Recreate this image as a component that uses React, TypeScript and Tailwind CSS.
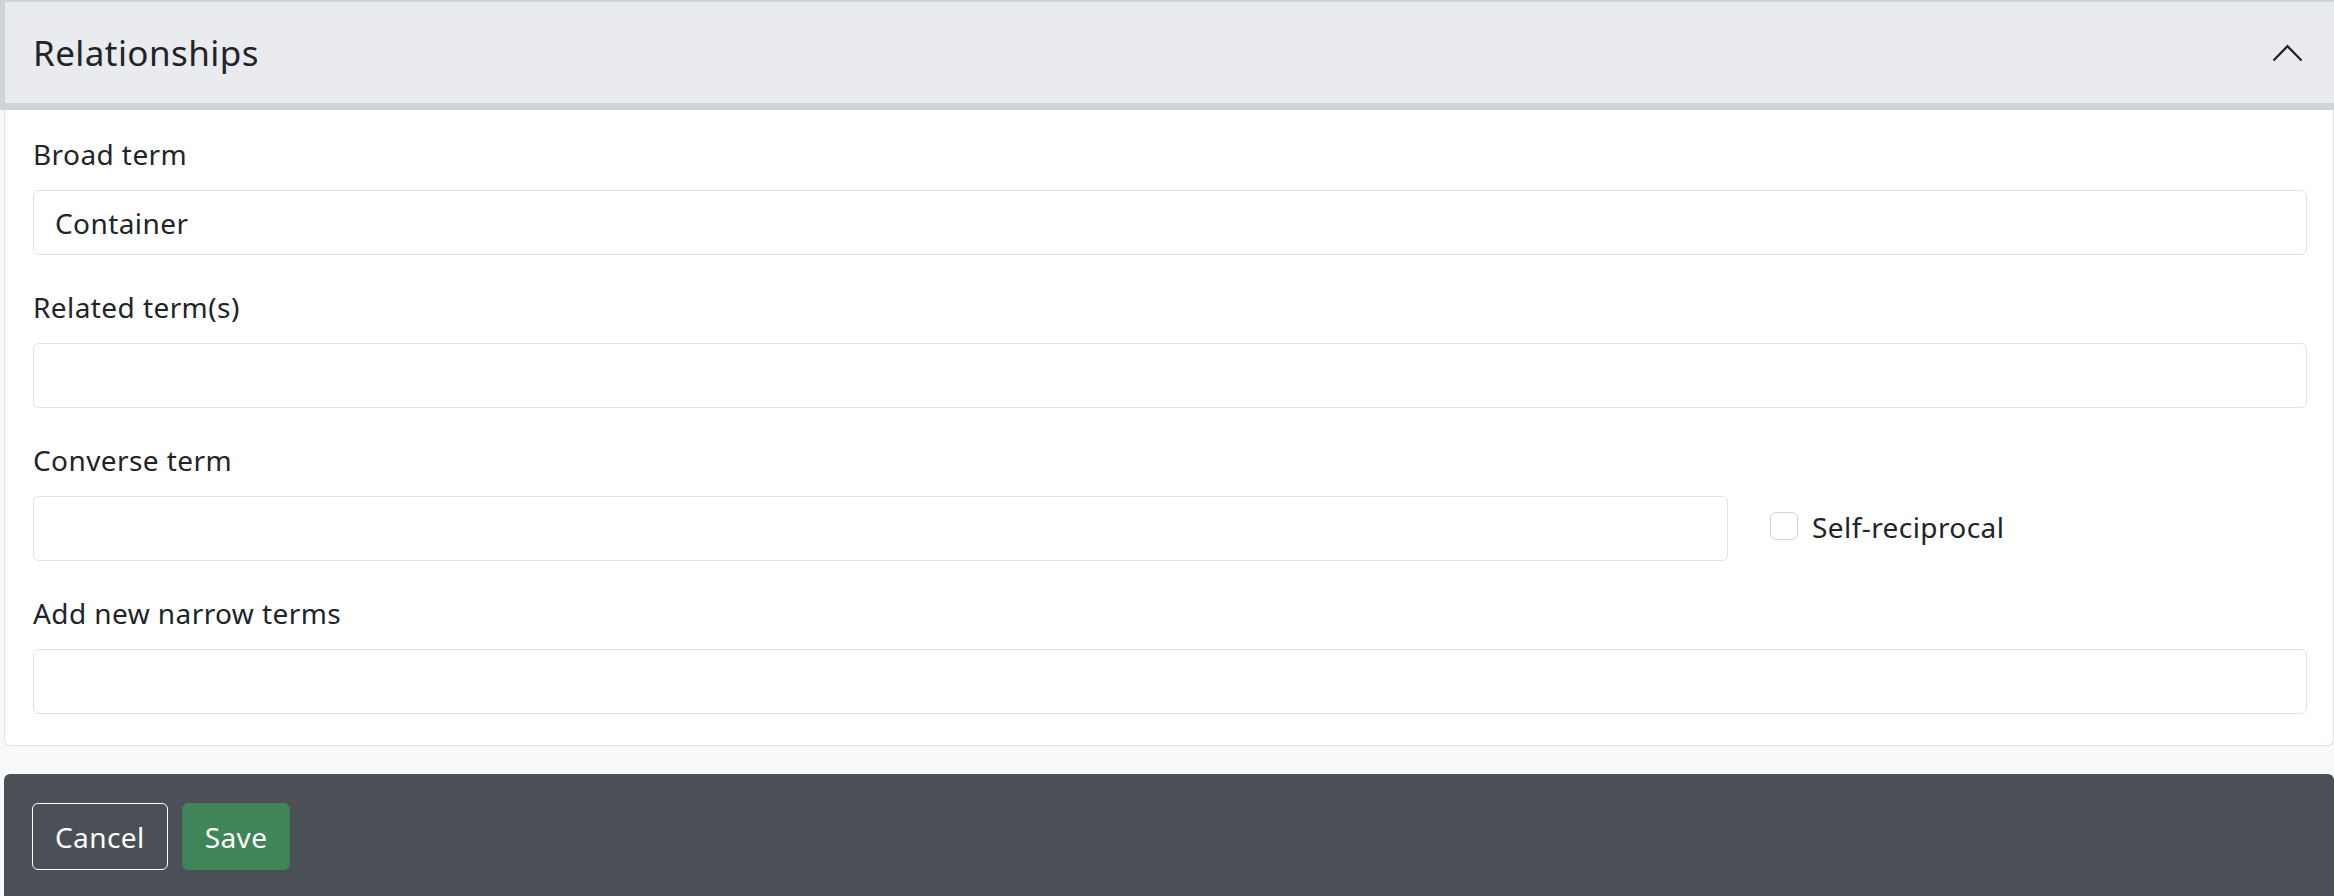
import React from "react"

function Field({ label, value, last }: { label: string; value?: string; last?: boolean }) {
  return (
    <div className={last ? "" : "mb-[31px]"}>
      <label className="mb-[15px] block leading-[42px]">{label}</label>
      <input
        readOnly
        value={value ?? ""}
        className="block h-[65px] w-full rounded-[6px] border border-[#dee2e6] bg-white px-[21px] text-[28px] leading-[42px] tracking-[0.015em] text-[#212529] outline-none"
      />
    </div>
  )
}

export default function App() {
  return (
    <div className="min-h-screen bg-[#f8f9fa] font-['Noto_Sans',sans-serif] text-[28px] tracking-[0.015em] text-[#212529]">
      {/* accordion header */}
      <div className="flex h-[110px] items-center justify-between border-t-2 border-b-[7px] border-l-[5px] border-[#cfd4d8] bg-[#e9ebee] pl-[28px] pr-[31px]">
        <span className="text-[35px] leading-[42px]">Relationships</span>
        <svg width="31" height="18" viewBox="0 0 31 18" fill="none" aria-hidden>
          <polyline points="1.5,16.5 15.5,2.2 29.5,16.5" stroke="#212529" strokeWidth="2.3" strokeLinejoin="miter" />
        </svg>
      </div>

      {/* accordion body */}
      <div className="ml-[4px] rounded-b-[6px] border-x border-b border-[#dee2e6] bg-white pt-[23px] pl-[28px] pr-[26px] pb-[31px]">
        <Field label="Broad term" value="Container" />
        <Field label="Related term(s)" />

        <div className="mb-[31px]">
          <label className="mb-[15px] block leading-[42px]">Converse term</label>
          <div className="grid grid-cols-12 gap-x-[42px]">
            <input
              readOnly
              value=""
              className="col-span-9 block h-[65px] w-full rounded-[6px] border border-[#dee2e6] bg-white px-[21px] text-[28px] outline-none"
            />
            <div className="col-span-3 mt-[10px] flex items-start gap-[14px]">
              <span className="mt-[6px] block h-[28px] w-[28px] shrink-0 rounded-[6px] border border-[#ced4da] bg-white" />
              <span className="leading-[42px]">Self-reciprocal</span>
            </div>
          </div>
        </div>

        <Field label="Add new narrow terms" last />
      </div>

      {/* footer */}
      <div className="mt-[28px] ml-[4px] flex gap-[14px] rounded-t-[6px] bg-[#4b5057] pt-[29px] pb-[29px] pl-[28px]">
        <button className="flex h-[67px] items-center rounded-[6px] border border-white px-[22px] text-[28px] tracking-[0.015em] text-white">
          Cancel
        </button>
        <button className="flex h-[67px] items-center rounded-[6px] border border-[#3f8557] bg-[#3f8557] px-[22px] text-[28px] tracking-[0.015em] text-white">
          Save
        </button>
      </div>
    </div>
  )
}
